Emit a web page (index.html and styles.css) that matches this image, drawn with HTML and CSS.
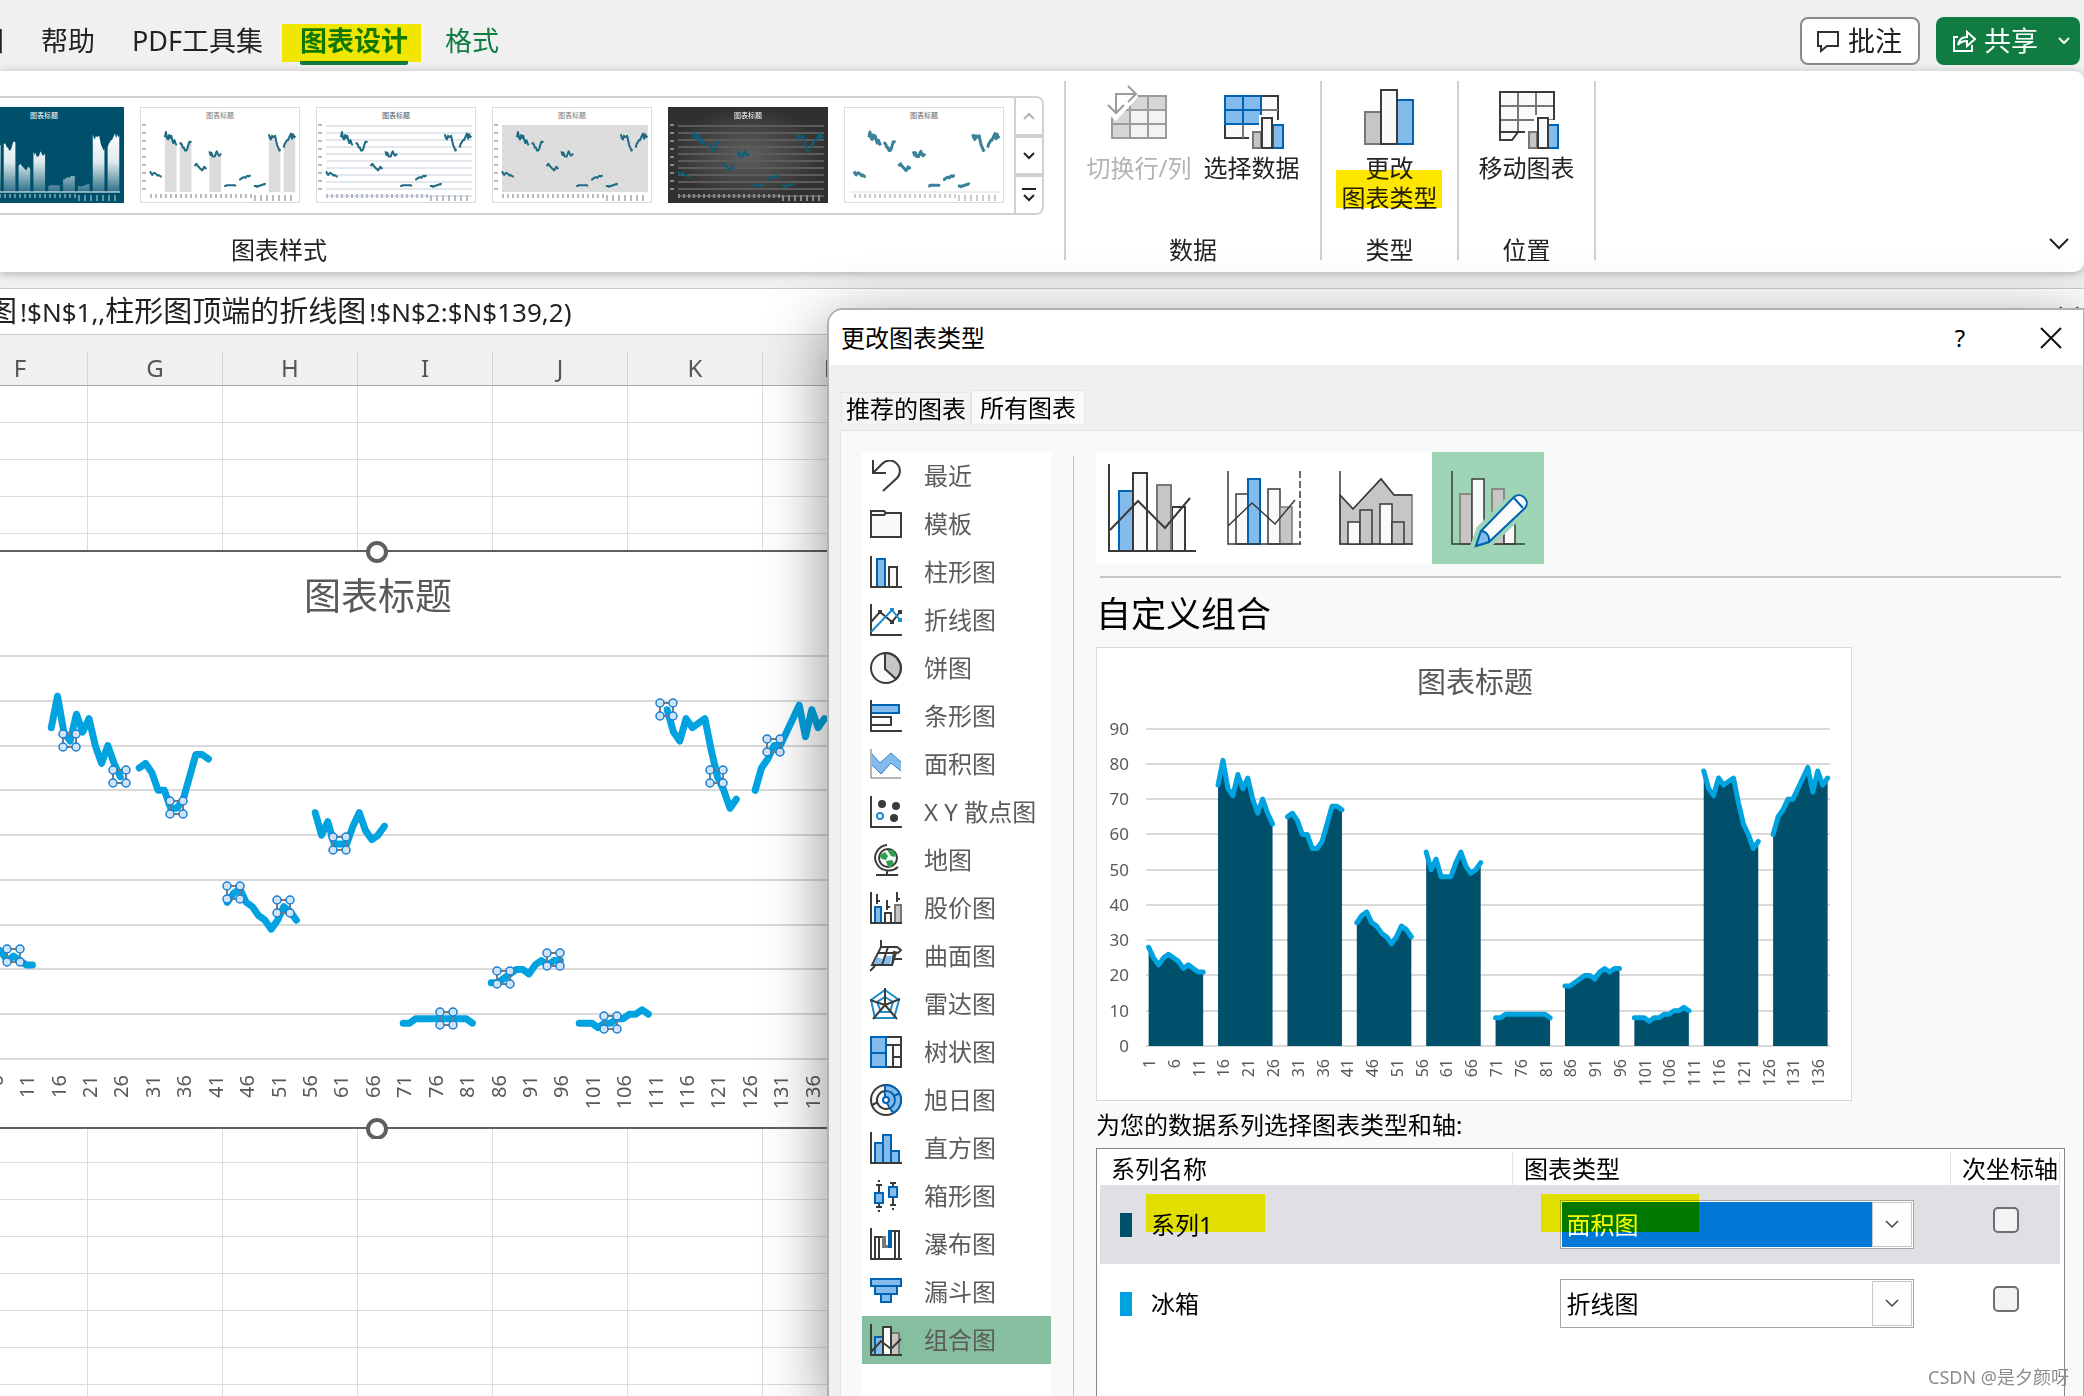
FILE: index.html
```html
<!DOCTYPE html>
<html lang="zh-CN">
<head>
<meta charset="utf-8">
<title>更改图表类型</title>
<link rel="stylesheet" href="styles.css">
</head>
<body>
<div class="app">
  <header class="menubar">
    <nav class="tabs">
      <a class="tab" href="#view">视图</a>
      <a class="tab" href="#help">帮助</a>
      <a class="tab" href="#pdf">PDF工具集</a>
      <a class="tab tab-active" href="#design">图表设计<span class="marker marker-tab"></span></a>
      <a class="tab tab-context" href="#format">格式</a>
    </nav>
    <div class="actions">
      <button class="btn btn-comment" type="button">
        <svg width="24" height="24" viewBox="0 0 24 24" fill="none" stroke="#333" stroke-width="2"><path d="M2 3h20v14H11l-6 5v-5H2z"/></svg>批注
      </button>
      <button class="btn btn-share" type="button">
        <svg width="24" height="24" viewBox="0 0 24 24" fill="none" stroke="#fff" stroke-width="2"><path d="M6 8H2v14h18v-6"/><path d="M6 16c1-6 4-8 9-8V3l8 7-8 7v-5c-4 0-7 1-9 4z"/></svg>共享
        <svg class="share-caret" width="12" height="8" viewBox="0 0 12 8" fill="none" stroke="#fff" stroke-width="2"><path d="M1 1l5 5 5-5"/></svg>
      </button>
    </div>
  </header>

  <section class="ribbon">
    <div class="group group-styles">
      <div class="gallery">
        <div class="thumbs">
          <button class="thumb" type="button" data-style="teal" aria-label="样式 1"></button>
          <button class="thumb" type="button" data-style="shade" aria-label="样式 2"></button>
          <button class="thumb" type="button" data-style="lines" aria-label="样式 3"></button>
          <button class="thumb" type="button" data-style="hatch" aria-label="样式 4"></button>
          <button class="thumb" type="button" data-style="dark" aria-label="样式 5"></button>
          <button class="thumb" type="button" data-style="plain" aria-label="样式 6"></button>
        </div>
        <div class="gallery-nav">
          <button type="button" aria-label="上一行"><svg width="14" height="10" viewBox="0 0 14 10" fill="none" stroke="#b5b5b5" stroke-width="2"><path d="M2 8l5-5 5 5"/></svg></button>
          <button type="button" aria-label="下一行"><svg width="14" height="10" viewBox="0 0 14 10" fill="none" stroke="#222" stroke-width="2"><path d="M2 2l5 5 5-5"/></svg></button>
          <button type="button" aria-label="更多"><svg width="14" height="16" viewBox="0 0 14 16" fill="none" stroke="#222" stroke-width="2"><path d="M0 2h14M2 8l5 5 5-5"/></svg></button>
        </div>
      </div>
      <div class="group-label">图表样式</div>
    </div>

    <div class="group group-data">
      <div class="tools">
        <button class="tool tool-off" type="button" disabled>
          <svg width="64" height="64" viewBox="0 0 64 64" fill="none">
            <path d="M4 10h56v43H4z" fill="#f3f3f3"/><path d="M4 10h56v15H23v28H4z" fill="#d6d6d6"/>
            <path d="M5 11h54v42H5zM5 25h54M5 39h54M23 11v42M41 11v42" stroke="#9c9c9c" stroke-width="2"/>
            <path d="M-4 24L9 36l22-24-6-16H0z" fill="#fff"/>
            <path d="M9 28V9h20M21 1l8 8-8 8M1 20l8 8 8-8" stroke="#9c9c9c" stroke-width="2"/>
          </svg>
          <span>切换行/列</span>
        </button>
        <button class="tool" type="button">
          <svg width="64" height="64" viewBox="0 0 64 64" fill="none">
            <path d="M6 11h53v42H6z" fill="#fafafa"/>
            <path d="M6 39v14h53V11H41" stroke="#3a3a38" stroke-width="2"/><path d="M41 25h18M24 39v14M41 39v14" stroke="#797774" stroke-width="2"/>
            <path d="M6 11h36v28H6zM24 11v28M6 25h36" fill="#83bbec" stroke="#0063b1" stroke-width="2"/>
            <path d="M30 44h10V30h14v5h14v30H30z" fill="#fff"/>
            <path d="M34 47h8v16h-8z" fill="#c8c6c4" stroke="#797774" stroke-width="2"/>
            <path d="M54 40h10v23H54z" fill="#83bbec" stroke="#0063b1" stroke-width="2"/>
            <path d="M43 33h10v30H43z" fill="#fafafa" stroke="#3a3a38" stroke-width="2"/>
          </svg>
          <span>选择数据</span>
        </button>
      </div>
      <div class="group-label">数据</div>
    </div>

    <div class="group group-type">
      <div class="tools">
        <button class="tool" type="button">
          <svg width="64" height="64" viewBox="0 0 64 64" stroke-width="2">
            <path d="M7 27h16v32H7z" fill="#c8c6c4" stroke="#797774"/>
            <path d="M39 15h16v44H39z" fill="#83bbec" stroke="#0063b1"/>
            <path d="M23 5h16v54H23z" fill="#fafafa" stroke="#3a3a38"/>
          </svg>
          <span>更改<br>图表类型</span>
          <span class="marker marker-tool"></span>
        </button>
      </div>
      <div class="group-label">类型</div>
    </div>

    <div class="group group-place">
      <div class="tools">
        <button class="tool" type="button">
          <svg width="64" height="64" viewBox="0 0 64 64" fill="none">
            <path d="M5 7h54v40H28l-6 8H5z" fill="#fafafa"/>
            <path d="M23 7v40M41 7v40M5 21h54M5 35h54" stroke="#797774" stroke-width="2"/>
            <path d="M5 47V7h54v38M5 47v8h12l6-8zM5 47h30" stroke="#3a3a38" stroke-width="2"/>
            <path d="M30 44h9V30h14v5h14v30H30z" fill="#fff"/>
            <path d="M34 47h8v16h-8z" fill="#c8c6c4" stroke="#797774" stroke-width="2"/>
            <path d="M53 40h10v23H53z" fill="#83bbec" stroke="#0063b1" stroke-width="2"/>
            <path d="M43 33h10v30H43z" fill="#fafafa" stroke="#3a3a38" stroke-width="2"/>
          </svg>
          <span>移动图表</span>
        </button>
      </div>
      <div class="group-label">位置</div>
    </div>
    <button class="collapse" type="button" aria-label="折叠功能区"><svg width="20" height="12" viewBox="0 0 20 12" fill="none" stroke="#222" stroke-width="2"><path d="M1 1l9 9 9-9"/></svg></button>
  </section>

  <div class="formula-bar">
    <div class="formula" role="textbox" aria-label="编辑栏">图<span class="latin">!$N$1,,</span>柱形图顶端的折线图<span class="latin">!$N$2:$N$139,2)</span></div>
    <svg width="20" height="12" viewBox="0 0 20 12" fill="none" stroke="#555" stroke-width="2"><path d="M1 1l9 9 9-9"/></svg>
  </div>

  <main class="sheet">
    <div class="columns"><span>F</span><span>G</span><span>H</span><span>I</span><span>J</span><span>K</span><span>L</span></div>
    <div class="cells">
      <figure class="chart-object">
        <svg id="sheet-chart" width="900" height="600" viewBox="0 0 900 600"></svg>
      </figure>
    </div>
  </main>
</div>

<section class="dialog" role="dialog" aria-labelledby="dialog-title">
  <header class="dialog-head">
    <h1 id="dialog-title">更改图表类型</h1>
    <button class="icon-btn" type="button">?</button>
    <button class="icon-btn" type="button" aria-label="关闭"><svg width="22" height="22" viewBox="0 0 22 22" stroke="#111" stroke-width="2"><path d="M1 1l20 20M21 1L1 21"/></svg></button>
  </header>
  <div class="dialog-tabs">
    <button class="dtab" type="button">推荐的图表</button>
    <button class="dtab dtab-on" type="button">所有图表</button>
  </div>
  <div class="dialog-body">
    <ul class="kinds">
      <li><a href="#recent"><svg class="ic" viewBox="0 0 32 32"><path class="d" d="M3 0v13h13M3 13l9-9c5-5 11-4 14-1 5 4 5 11 1 15L13 31"/></svg>最近</a></li>
      <li><a href="#template"><svg class="ic" viewBox="0 0 32 32"><path class="d w" d="M1 3h13l2 2h15v24H1z"/><path class="d" d="M1 7h13l2-2"/></svg>模板</a></li>
      <li><a href="#column"><svg class="ic" viewBox="0 0 32 32"><path class="b" d="M7 3h8v28H7z"/><path class="d w" d="M19 11h8v20h-8z"/><path class="d" d="M1 0v31h31"/></svg>柱形图</a></li>
      <li><a href="#line"><svg class="ic" viewBox="0 0 32 32"><path class="d" d="M1 0v31h31M1 18L10 8l12 10 8-10"/><path class="l" d="M1 28L22 6l8 10"/><path fill="#3a3a38" d="M8 6h4v4H8zM20 16h4v4h-4zM28 6h4v4h-4z"/><path fill="#1e8bcd" d="M20 4h4v4h-4zM28 14h4v4h-4z"/></svg>折线图</a></li>
      <li><a href="#pie"><svg class="ic" viewBox="0 0 32 32"><circle class="d w" cx="16" cy="16" r="15"/><path class="d g" d="M15 1v16l11 10c6-6 6-14 2-19-3-5-8-7-13-7z"/></svg>饼图</a></li>
      <li><a href="#bar"><svg class="ic" viewBox="0 0 32 32"><path class="b" d="M1 5h28v8H1z"/><path class="d w" d="M1 17h20v8H1z"/><path class="d" d="M1 0v31h31"/></svg>条形图</a></li>
      <li><a href="#area"><svg class="ic" viewBox="0 0 32 32"><path fill="#83bbec" d="M2 6l8 9L21 5l10 9v9l-10-8-10 11-9-9z"/><path d="M2 6l8 9L21 5l10 9M2 17l9 9 10-11 10 8" fill="none" stroke="#2b82c9"/><path d="M1 1v29h30" fill="none" stroke="#6b6b6b"/></svg>面积图</a></li>
      <li><a href="#scatter"><svg class="ic" viewBox="0 0 32 32"><path class="d" d="M1 0v31h31"/><g fill="#3a3a38"><circle cx="12" cy="8" r="4"/><circle cx="26" cy="10" r="4"/><circle cx="24" cy="22" r="4"/></g><circle class="l" cx="10" cy="20" r="3"/></svg>X Y 散点图</a></li>
      <li><a href="#map"><svg class="ic" viewBox="0 0 32 32"><path class="d" d="M17 1C8 2 3 11 6 18c3 9 15 11 22 5M17 26v5M6 31h22"/><circle class="d w" cx="18" cy="14" r="9"/><path fill="#2f9e4f" d="M10 11l5-3 3 4-2 4-4-1-2-2zM17 6h6l3 4-1 3-4-1-2-3zM16 17l6-1 2 3-3 4h-3z"/></svg>地图</a></li>
      <li><a href="#stock"><svg class="ic" viewBox="0 0 32 32"><path class="b" d="M5 15h6v16H5z"/><path class="d w" d="M15 21h6v10h-6z"/><path class="g" stroke="#797774" stroke-width="2" d="M25 13h6v18h-6z"/><path class="d" d="M1 0v31h31M7 2v10M7 9h3M17 8v10M17 15h3M27 0v10M27 7h3"/></svg>股价图</a></li>
      <li><a href="#surface"><svg class="ic" viewBox="0 0 32 32"><path class="d w" d="M11 7h16l4 3-3 3-4-1-2 13H2z"/><path fill="#83bbec" d="M7 17l5 2 4-3h6l-2 8H4z"/><path class="d" d="M11 0v8M8 13h17M18 7l-6 18M22 19h10M5 26l-5 5M2 25h20l4-12"/></svg>曲面图</a></li>
      <li><a href="#radar"><svg class="ic" viewBox="0 0 32 32"><path class="l" d="M15 2l14 10-5 18H5L1 12zM15 9l8 5-3 10h-9L7 14z"/><path class="d" d="M15 0v17L0 12M15 17l15-6M15 17l12 14M15 17L3 31"/></svg>雷达图</a></li>
      <li><a href="#treemap"><svg class="ic" viewBox="0 0 32 32"><path class="d w" d="M16 1h15v30H16zM16 9h15M23 9v22M23 21h8"/><path class="b" d="M1 1h15v30H1zM1 17h15"/></svg>树状图</a></li>
      <li><a href="#sunburst"><svg class="ic" viewBox="0 0 32 32"><circle class="d w" cx="16" cy="16" r="15"/><path class="b" d="M15 1v15l8 13c6-3 8-8 8-13C31 7 24 1 15 1z"/><path class="d" d="M15 7a9 9 0 1 0 5 17M2 21l6-3"/><path class="b" d="M15 7a9 9 0 0 1 5 17M24 12l6-3"/><circle class="b w" cx="16" cy="16" r="3"/></svg>旭日图</a></li>
      <li><a href="#histogram"><svg class="ic" viewBox="0 0 32 32"><path class="b" d="M5 11h8v20H5zM21 19h8v12h-8zM13 3h8v28h-8z"/><path class="d" d="M1 0v31h31"/></svg>直方图</a></li>
      <li><a href="#box"><svg class="ic" viewBox="0 0 32 32"><path class="d" d="M9 5v22M6 5h6M6 27h6M8 1h2M8 31h2M23 3v22M20 3h6M20 25h6M22 29h2"/><path class="b" d="M5 13h8v10H5zM19 7h8v10h-8z"/></svg>箱形图</a></li>
      <li><a href="#waterfall"><svg class="ic" viewBox="0 0 32 32"><path class="d" d="M1 0v31h31M5 31V9h8M9 9v22M22 3h7v28M25 3v28"/><path fill="#797774" d="M12 8h4v9h2v3h-6z"/><path fill="#0063b1" d="M18 2h4v18h-4z"/></svg>瀑布图</a></li>
      <li><a href="#funnel"><svg class="ic" viewBox="0 0 32 32"><path class="b" d="M1 3h30v7H1zM5 10h22v8H5zM11 18h10v8H11z"/></svg>漏斗图</a></li>
      <li><a class="kind-on" href="#combo"><svg class="ic" viewBox="0 0 32 32"><path class="b" d="M5 13h8v18H5z"/><path class="g" stroke="#797774" stroke-width="2" d="M21 9h8v22h-8z"/><path class="d w" d="M13 3h8v28h-8z"/><path class="d" d="M1 0v31h31M1 28l10-11 10 8 10-10"/></svg>组合图</a></li>
    </ul>

    <div class="detail">
      <div class="subtypes">
        <button type="button" aria-label="簇状柱形图 - 折线图"><svg viewBox="0 0 112 112"><path class="b" d="M23 39h14v60H23z"/><path class="d w" d="M37 21h14v78H37zM76 55h13v44H76z"/><path class="g" stroke="#797774" stroke-width="2" d="M61 33h14v66H61z"/><path class="d" d="M13 12v87h87M14 78l28-29 27 27 25-30"/></svg></button>
        <button type="button" aria-label="次坐标轴上的折线图"><svg viewBox="0 0 112 112"><path class="d w thin" d="M28 42h12v50H28zM60 37h12v55H60z"/><path class="b" d="M40 27h12v65H40z"/><path class="g thin" stroke="#797774" d="M72 55h12v37H72z"/><path class="d thin" d="M20 19v73h73M20 74l24-23 23 21 20-24"/><path class="d thin" stroke-dasharray="7 3" d="M92 19v73"/></svg></button>
        <button type="button" aria-label="堆积面积图 - 簇状柱形图"><svg viewBox="0 0 112 112"><path class="g thin" stroke="#797774" d="M20 43l13 14 28-30 13 16h18v49H20z"/><path class="d thin" d="M20 19v73h73M20 43l13 14 28-30 13 16h18"/><path class="d w thin" d="M28 70h12v22H28zM60 52h12v40H60z"/><path class="d g thin" d="M40 58h12v34H40zM72 70h12v22H72z"/></svg></button>
        <button class="sub-on" type="button" aria-label="自定义组合"><svg viewBox="0 0 112 112"><path class="g thin" stroke="#797774" d="M28 42h12v50H28zM60 37h12v55H60z"/><path class="d w thin" d="M40 27h12v65H40zM72 60h11v32H72z"/><path class="d thin" d="M20 19v73h73"/><path d="M43 95l6-17 33-33c7-6 17 4 11 11L57 90z" fill="#9fd5b7" stroke="#9fd5b7" stroke-width="10"/><path class="w" stroke="#0063b1" stroke-width="2" d="M44 94l5-15 33-34c7-6 17 4 11 11L57 90z"/><path class="b" d="M44 94l5-15c5 0 9 5 8 11z"/><path class="b" d="M82 46l9 10"/></svg></button>
      </div>
      <h2>自定义组合</h2>
      <figure class="preview"><svg id="preview-chart" width="756" height="452" viewBox="0 0 756 452"></svg></figure>
      <p class="hint">为您的数据系列选择图表类型和轴:</p>
      <div class="series-box">
        <table class="series">
          <colgroup><col><col class="col-type"><col class="col-axis"></colgroup>
          <thead><tr><th>系列名称</th><th>图表类型</th><th>次坐标轴</th></tr></thead>
          <tbody>
            <tr class="row-on">
              <td><div class="name"><span class="swatch swatch-area"></span>系列1</div><span class="marker marker-name"></span></td>
              <td><label class="combo combo-on"><select aria-label="系列1 图表类型"><option>面积图</option></select><span class="arrow"><svg width="14" height="9" viewBox="0 0 14 9" fill="none" stroke="#444" stroke-width="1.5"><path d="M1 1l6 6 6-6"/></svg></span></label><span class="marker marker-combo"></span></td>
              <td><input type="checkbox" aria-label="系列1 次坐标轴"></td>
            </tr>
            <tr>
              <td><div class="name"><span class="swatch swatch-line"></span>冰箱</div></td>
              <td><label class="combo"><select aria-label="冰箱 图表类型"><option>折线图</option></select><span class="arrow"><svg width="14" height="9" viewBox="0 0 14 9" fill="none" stroke="#444" stroke-width="1.5"><path d="M1 1l6 6 6-6"/></svg></span></label></td>
              <td><input type="checkbox" aria-label="冰箱 次坐标轴"></td>
            </tr>
          </tbody>
        </table>
      </div>
    </div>
  </div>
</section>
<div class="watermark">CSDN @是夕颜呀</div>
<script src="charts.js"></script>
</body>
</html>
```

FILE: styles.css
```css
* { box-sizing: border-box; }
html, body { height: 100%; }
body {
  margin: 0;
  overflow: hidden;
  position: relative;
  background: #f0f0f0;
  color: #222;
  font: 24px/30px "Noto Sans", "Noto Sans CJK SC", sans-serif;
}
button, select, input { font: inherit; color: inherit; }
button { border: 0; background: none; padding: 0; }
a { color: inherit; text-decoration: none; }
svg { display: block; flex: none; }
figure, h1, h2, p, ul { margin: 0; padding: 0; }

.app { height: 100%; display: flex; flex-direction: column; }
.marker { position: absolute; mix-blend-mode: multiply; background: #ff0; pointer-events: none; }

/* menu bar */
.menubar { display: flex; justify-content: space-between; height: 70px; padding: 17px 4px 0 0; }
.tabs { display: flex; gap: 37px; margin-left: -50px; font-size: 27px; line-height: 48px; height: 48px; white-space: nowrap; }
.tab { position: relative; }
.tab-active { color: #107c41; font-weight: 700; border-bottom: 4px solid #107c41; border-radius: 2px; }
.tab-context { color: #107c41; }
.marker-tab { left: -18px; right: -13px; top: 7px; height: 38px; background: #fff500; }
.actions { display: flex; gap: 16px; }
.btn { display: flex; align-items: center; gap: 8px; height: 48px; border-radius: 8px; font-size: 27px; white-space: nowrap; }
.btn-comment { border: 2px solid #8a8a8a; background: #fff; padding: 0 16px 0 14px; }
.btn-share { background: #107c41; color: #fff; padding: 0 10px 0 16px; }
.share-caret { margin-left: 12px; }

/* ribbon */
.ribbon {
  display: flex; position: relative; height: 202px; flex: none;
  background: #fff; border-top: 1px solid #ddd; border-radius: 0 10px 10px 0;
  box-shadow: 0 2px 8px rgba(0,0,0,.25); padding: 10px 0 12px;
}
.group { display: flex; flex-direction: column; justify-content: space-between; align-items: center; border-right: 2px solid #d0d0d0; }
.group-styles { width: 1066px; flex: none; align-items: flex-start; padding-top: 15px; }
.group-styles .group-label { padding-left: 231px; }
.group-data { width: 256px; }
.group-type, .group-place { width: 137px; }
.group-label { line-height: 20px; white-space: nowrap; }
.gallery { display: flex; margin-left: -48px; height: 119px; border: 2px solid #d0d0d0; border-radius: 8px; overflow: hidden; }
.thumbs { display: flex; gap: 16px; padding: 9px 10px 0; }
.thumb { width: 160px; height: 96px; overflow: hidden; }
.gallery-nav { display: flex; flex-direction: column; width: 28px; gap: 4px; background: #d0d0d0; border-left: 2px solid #d0d0d0; }
.gallery-nav button { flex: 1; display: grid; place-items: center; background: #fff; }
.tools { display: flex; gap: 12px; padding-top: 4px; }
.tool { position: relative; display: flex; flex-direction: column; align-items: center; gap: 4px; white-space: nowrap; }
.tool svg { overflow: visible; }
.tool-off { color: #b4b4b4; }
.marker-tool { left: -6px; right: -4px; top: 85px; height: 38px; background: #ffe600; }
.collapse { margin: auto 15px 10px auto; }

/* formula bar */
.formula-bar {
  display: flex; justify-content: space-between; align-items: center; height: 47px; flex: none;
  margin-top: 16px; padding-right: 5px; background: #fff;
  border-top: 1px solid #c8c8c8; border-bottom: 1px solid #c8c8c8;
}
.formula { margin-left: -12px; font-size: 29px; line-height: 40px; height: 42px; white-space: nowrap; }
.latin { font-size: 26px; padding-left: 3px; }

/* worksheet */
.sheet { flex: 1; display: flex; flex-direction: column; min-height: 0; overflow: hidden; }
.columns { display: grid; grid-template-columns: repeat(7, 135px); height: 51px; margin-left: -47px; border-bottom: 1px solid #ababab; }
.columns span { text-align: center; color: #555; line-height: 34px; margin-top: 16px; border-right: 1px solid #d4d4d4; }
.cells {
  flex: 1; position: relative;
  background:
    repeating-linear-gradient(to bottom, transparent 0 36px, #dcdcdc 36px 37px),
    repeating-linear-gradient(to right, transparent 0 134px, #dcdcdc 134px 135px) -47px 0 / calc(100% + 47px) 100%,
    #fff;
}
.chart-object { position: absolute; left: 0; right: 0; top: 164px; height: 579px; background: #fff; border: solid #5f5f5f; border-width: 2px 0; }
.chart-object svg { position: absolute; left: 0; top: -13px; }

/* dialog */
.dialog {
  position: absolute; left: 827px; right: 0; top: 308px; bottom: 0; overflow: hidden;
  display: flex; flex-direction: column; background: #f0f0f0; color: #000;
  border: solid #b0b0b0; border-width: 2px 1px 0 2px; border-radius: 16px 0 0 0;
  box-shadow: 0 16px 64px rgba(0,0,0,.45);
}
.dialog-head { display: flex; align-items: center; height: 55px; flex: none; padding: 0 20px 0 12px; background: #fff; }
.dialog-head h1 { flex: 1; font-size: 24px; font-weight: 400; }
.icon-btn { width: 24px; height: 30px; display: grid; place-items: center; margin-left: 67px; }
.dialog-tabs { display: flex; align-items: flex-end; height: 59px; flex: none; padding-left: 12px; }
.dtab { height: 32px; border: 1px solid #e4e4e4; border-bottom: 0; background: #f3f3f3; padding: 0 4px; line-height: 30px; white-space: nowrap; }
.dtab-on { height: 34px; background: #f9f9f9; padding: 0 8px; }
.dialog-body { flex: 1; display: flex; min-height: 0; margin: 6px 0 0 11px; padding: 21px 18px 0 21px; background: #f9f9f9; border: 1px solid #e2e2e2; border-width: 1px 0 0 1px; }
.kinds { width: 189px; flex: none; list-style: none; background: #fff; color: #5c5c5c; }
.kinds a { display: flex; align-items: center; gap: 22px; height: 48px; padding-left: 8px; white-space: nowrap; }
.kinds .kind-on { background: #86bf9f; }
.ic { width: 32px; height: 32px; }
.d { fill: none; stroke: #3a3a38; stroke-width: 2; }
.b { fill: #83bbec; stroke: #0063b1; stroke-width: 2; }
.l { fill: none; stroke: #1e8bcd; stroke-width: 2; }
.g { fill: #c8c6c4; }
.w { fill: #fafafa; }
.thin { stroke-width: 1.5; }

.detail { flex: 1; min-width: 0; display: flex; flex-direction: column; margin: 4px 0 0 22px; border-left: 1px solid #c6c6c6; padding-left: 22px; }
.subtypes { display: flex; margin-top: -4px; padding-bottom: 12px; }
.subtypes button { width: 112px; height: 112px; background: #fff; }
.subtypes .sub-on { background: #9fd5b7; }
.detail h2 { margin: 0 4px; padding-top: 13px; border-top: 2px solid #c6c6c6; font-size: 35px; line-height: 46px; height: 71px; font-weight: 400; text-indent: -4px; }
.preview { width: 756px; height: 454px; flex: none; border: 1px solid #d9d9d9; background: #fff; }
.hint { line-height: 48px; height: 47px; white-space: nowrap; }
.series-box { flex: 1; border: 1px solid #828790; border-bottom: 0; background: #fff; padding: 3px 4px 0 3px; }
.series { width: 100%; table-layout: fixed; border-collapse: collapse; }
.col-type { width: 438px; }
.col-axis { width: 109px; }
.series th { height: 33px; padding: 0 0 0 11px; text-align: left; font-weight: 400; line-height: 32px; border-right: 1px solid #e2e2e2; white-space: nowrap; }
.series td { position: relative; height: 79px; padding: 0; }
.row-on { background: #e0dfe4; }
.name { display: flex; align-items: center; gap: 19px; padding-left: 20px; }
.swatch { width: 12px; height: 24px; }
.swatch-area { background: #00506b; }
.swatch-line { background: #00a3e0; }
.combo { position: relative; display: flex; width: 354px; height: 49px; margin-left: 47px; padding: 1px; border: 1px solid #a5a5a5; background: #fff; }
.combo select { flex: 1; appearance: none; border: 0; border-radius: 0; background: #fff; padding: 0 5px; outline: 0; }
.combo-on select { background: #0078d7; color: #fff; }
.combo .arrow { width: 40px; display: grid; place-items: center; border: 1px solid #c8c8c8; background: #fdfdfd; }
.series input { appearance: none; display: block; width: 26px; height: 26px; margin: 0 0 10px 42px; border: 2px solid #6e6e6e; border-radius: 5px; background: #f3f3f3; }
.marker-name { left: 46px; top: 9px; width: 119px; height: 38px; }
.marker-combo { left: 28px; top: 9px; width: 158px; height: 38px; }

.watermark { position: absolute; right: 15px; bottom: 4px; font-size: 18px; color: #8c8c8c; }

/* charts */
.grid { stroke: #d9d9d9; stroke-width: 2; }
.axis-text { fill: #595959; }
.chart-title { fill: #595959; text-anchor: middle; }
.area { fill: #00506b; }
.series-line { fill: none; stroke: #00a3e0; stroke-linecap: round; stroke-linejoin: round; }
.knob { fill: #cfe4f7; stroke: #1a7fd6; stroke-width: 1.5; }
.knob-box { fill: none; stroke: #7a7a7a; stroke-width: 2; }
.handle { fill: #fff; stroke: #5f5f5f; stroke-width: 4; }
```

FILE: charts.js
```js
// Each run is [first category, values]; the gaps between runs are blank cells.
const RUNS = [
  [1, [28, 25, 23, 25, 26, 25, 24, 22, 23, 22, 21, 21]],
  [15, [74, 81, 73, 71, 77, 73, 76, 70, 66, 70, 66, 63]],
  [29, [65, 66, 64, 60, 60, 56, 56, 58, 63, 68, 68, 67]],
  [43, [35, 37, 38, 35, 34, 32, 31, 29, 31, 34, 33, 31]],
  [57, [55, 50, 53, 48, 48, 48, 52, 55, 51, 49, 50, 52]],
  [71, [8, 8, 9, 9, 9, 9, 9, 9, 9, 9, 9, 8]],
  [85, [17, 17, 18, 19, 20, 20, 19, 21, 22, 21, 22, 22]],
  [99, [8, 8, 8, 7, 8, 8, 9, 9, 10, 10, 11, 10]],
  [113, [78, 73, 71, 76, 74, 75, 76, 69, 63, 60, 56, 58]],
  [127, [60, 65, 67, 70, 70, 73, 76, 79, 72, 78, 74, 76]]
];

// x0/y0: position of category 0 and value 0; dx/dy: pixels per unit.
function lines(c, attrs) {
  return RUNS.map(([s, v]) => `<polyline ${attrs} points="${v.map((n, i) => `${c.x0 + (s + i) * c.dx},${c.y0 - n * c.dy}`).join(" ")}"/>`).join("");
}
function areas(c, attrs, runs = RUNS) {
  return runs.map(([s, v]) => {
    const top = v.map((n, i) => `${c.x0 + (s + i) * c.dx},${c.y0 - n * c.dy}`).join(" ");
    return `<polygon ${attrs} points="${c.x0 + s * c.dx},${c.y0} ${top} ${c.x0 + (s + v.length - 1) * c.dx},${c.y0}"/>`;
  }).join("");
}
function grid(c, x1, x2) {
  let out = "";
  for (let v = 0; v <= 90; v += 10) out += `<line class="grid" x1="${x1}" x2="${x2}" y1="${Math.round(c.y0 - v * c.dy)}" y2="${Math.round(c.y0 - v * c.dy)}"/>`;
  return out;
}
function categories(c, y, size) {
  let out = "";
  for (let i = 1; i <= 136; i += 5) out += `<text class="axis-text" font-size="${size}" text-anchor="end" transform="translate(${c.x0 + i * c.dx + size * 0.4} ${y}) rotate(-90)">${i}</text>`;
  return out;
}

const sheet = { x0: -43, dx: 6.285, y0: 520, dy: 4.478 };
const knobs = [[9, 23], [18, 71], [26, 63], [35, 56], [44, 37], [52, 34], [61, 48], [78, 9], [87, 18], [95, 22], [104, 8], [113, 78], [121, 63], [130, 70]].map(([i, v]) => {
  const x = Math.round(sheet.x0 + i * sheet.dx) - 1, y = Math.round(sheet.y0 - v * sheet.dy) - 1;
  const dots = [[-6, -6], [7, -6], [-6, 7], [7, 7]].map(([a, b]) => `<circle class="knob" cx="${x + a}" cy="${y + b}" r="4"/>`).join("");
  return `<rect class="knob-box" x="${x - 6}" y="${y - 6}" width="13" height="13"/>${dots}`;
}).join("");
document.getElementById("sheet-chart").innerHTML =
  `<text class="chart-title" x="378" y="71" font-size="37">图表标题</text>` +
  grid(sheet, 0, 900) + lines(sheet, 'class="series-line" stroke-width="7"') + knobs + categories(sheet, 536, 20) +
  `<circle class="handle" cx="377" cy="13" r="9"/><circle class="handle" cx="377" cy="590" r="9"/>`;

const preview = { x0: 46.7, dx: 4.956, y0: 398, dy: 3.526 };
let values = "";
for (let v = 0; v <= 90; v += 10) values += `<text class="axis-text" font-size="17" text-anchor="end" x="32" y="${preview.y0 - v * preview.dy + 6}">${v}</text>`;
document.getElementById("preview-chart").innerHTML =
  `<text class="chart-title" x="378" y="45" font-size="29">图表标题</text>` +
  grid(preview, 49, 733) + areas(preview, 'class="area"') + lines(preview, 'class="series-line" stroke-width="5"') +
  values + categories(preview, 411, 16);

const thumb = { x0: 9, dx: 1.06, y0: 85, dy: 0.74 };
const looks = {
  teal: { bg: "#00506b", title: "#fff", text: "#5f96a8", area: "url(#fade)" },
  shade: { bg: "#fff", title: "#777", text: "#bbb", area: "#dcdcdc", line: "#1d6a84" },
  lines: { bg: "#fff", title: "#44546a", text: "#b4bac6", grid: "#e2e7ee", line: "#1d6a84" },
  hatch: { bg: "#fff", title: "#777", text: "#bbb", plot: "url(#hatch)", line: "#1d6a84" },
  dark: { bg: "url(#night)", title: "#fff", text: "#888", grid: "#5c5c5c", line: "#0b5f7c" },
  plain: { bg: "#fff", title: "#666", text: "#ccc", line: "#3a8299", dash: true }
};
const defs = `<defs>
  <linearGradient id="fade" gradientUnits="userSpaceOnUse" x1="0" y1="25" x2="0" y2="85"><stop offset="0" stop-color="#fff"/><stop offset=".5" stop-color="#dfeaee"/><stop offset="1" stop-color="#2f718a"/></linearGradient>
  <radialGradient id="night"><stop offset="0" stop-color="#5e5e5e"/><stop offset="1" stop-color="#303030"/></radialGradient>
  <pattern id="hatch" width="8" height="8" patternUnits="userSpaceOnUse"><rect width="8" height="8" fill="#dedede"/><path d="M0 0l8 8" stroke="#d2d2d2"/></pattern></defs>`;
document.querySelectorAll(".thumb").forEach((el, n) => {
  const k = looks[el.dataset.style];
  let s = n ? "" : defs;
  s += `<rect width="160" height="96" fill="${k.bg}" stroke="${k.bg === "#fff" ? "#dcdcdc" : "none"}" stroke-width="2"/>`;
  if (k.plot) s += `<rect x="10" y="18" width="146" height="67" fill="${k.plot}"/>`;
  if (k.grid) for (let y = 19; y < 90; y += 7) s += `<path d="M10 ${y}h146" stroke="${k.grid}" stroke-width="2"/>`;
  if (k.area) s += areas(thumb, `fill="${k.area}"`, k.line ? RUNS.filter(([, v]) => v[0] > 50) : RUNS);
  if (k.line) s += lines(thumb, `fill="none" stroke="${k.line}" stroke-width="${k.dash ? 3 : 2}" stroke-linejoin="round"`);
  if (el.dataset.style === "teal" || k.dash) s += `<path d="M6 85h150" stroke="${k.dash ? "#ddd" : "#fff"}"/>`;
  s += `<path d="M10 89h102" stroke="${k.text}" stroke-width="4" stroke-dasharray="2 3"/><path d="M114 91h42" stroke="${k.text}" stroke-width="6" stroke-dasharray="2 4"/>`;
  if (!k.dash) s += `<path d="M4 17v68" stroke="${k.text}" stroke-width="4" stroke-dasharray="2 6"/>`;
  s += `<text x="80" y="11" font-size="7" text-anchor="middle" fill="${k.title}">图表标题</text>`;
  el.innerHTML = `<svg width="160" height="96" viewBox="0 0 160 96">${s}</svg>`;
});
```
